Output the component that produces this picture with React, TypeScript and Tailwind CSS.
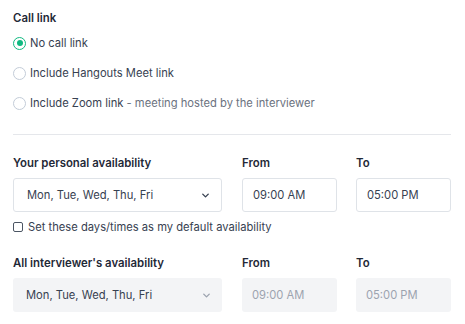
import { ChevronDown } from "lucide-react";

function Radio({ checked, children }: { checked?: boolean; children: React.ReactNode }) {
	return (
		<label className="flex items-center h-[20px] gap-[4px]">
			{checked ? (
				<span className="w-[13px] h-[13px] rounded-full border-[1.5px] border-[#10b981] flex items-center justify-center">
					<span className="w-[6px] h-[6px] rounded-full bg-[#10b981]"></span>
				</span>
			) : (
				<span className="w-[13px] h-[13px] rounded-full border border-[#c3ccd8] bg-white"></span>
			)}
			<span className="text-[11.2px] text-[#374151]">{children}</span>
		</label>
	);
}

function Field({ value, disabled, select, width }: { value: string; disabled?: boolean; select?: boolean; width: string }) {
	return (
		<div
			className={`${width} h-[34px] rounded-[3px] flex items-center justify-between text-[11.2px] ${
				disabled ? "bg-[#f3f4f6] text-[#6b7280]" : "bg-white border border-[#dfe3e8] text-[#374151]"
			} ${select ? "pl-[13px] pr-[10px]" : "pl-[10px]"}`}
		>
			<span className={disabled ? (select ? "text-[#374151]" : "text-[#9ca3af]") : ""}>{value}</span>
			{select && (
				<ChevronDown
					className={`w-[11px] h-[11px] ${disabled ? "text-[#9ca3af]" : "text-[#374151]"}`}
					strokeWidth={3}
				/>
			)}
		</div>
	);
}

function Label({ children }: { children: React.ReactNode }) {
	return <div className="h-[16px] leading-[16px] text-[11.4px] font-semibold text-[#1f2937]">{children}</div>;
}

function Row({ title, disabled }: { title: string; disabled?: boolean }) {
	return (
		<div className="flex">
			<div className="w-[209px]">
				<Label>{title}</Label>
				<div className="mt-[7px]">
					<Field value="Mon, Tue, Wed, Thu, Fri" select disabled={disabled} width="w-[209px]" />
				</div>
			</div>
			<div className="w-[95px] ml-[20px]">
				<Label>From</Label>
				<div className="mt-[7px]">
					<Field value="09:00 AM" disabled={disabled} width="w-[95px]" />
				</div>
			</div>
			<div className="w-[95px] ml-[19px]">
				<Label>To</Label>
				<div className="mt-[7px]">
					<Field value="05:00 PM" disabled={disabled} width="w-[95px]" />
				</div>
			</div>
		</div>
	);
}

export default function App() {
	return (
		<div className="w-[465px] h-[324px] bg-white px-[13px] pt-[10px] font-['Inter',sans-serif]">
			<Label>Call link</Label>
			<div className="mt-[7px] flex flex-col gap-[10px]">
				<Radio checked>No call link</Radio>
				<Radio>Include Hangouts Meet link</Radio>
				<Radio>
					Include Zoom link <span className="text-[#6b7280]">- meeting hosted by the interviewer</span>
				</Radio>
			</div>
			<div className="mt-[21px] w-[438px] border-t border-[#e5e7eb]"></div>
			<div className="mt-[20px]">
				<Row title="Your personal availability" />
			</div>
			<label className="mt-[7px] flex items-center h-[16px] gap-[5px]">
				<span className="w-[10px] h-[10px] rounded-[2px] border border-[#4b5563] bg-white"></span>
				<span className="text-[11.2px] text-[#374151]">Set these days/times as my default availability</span>
			</label>
			<div className="mt-[20px]">
				<Row title="All interviewer's availability" disabled />
			</div>
		</div>
	);
}
